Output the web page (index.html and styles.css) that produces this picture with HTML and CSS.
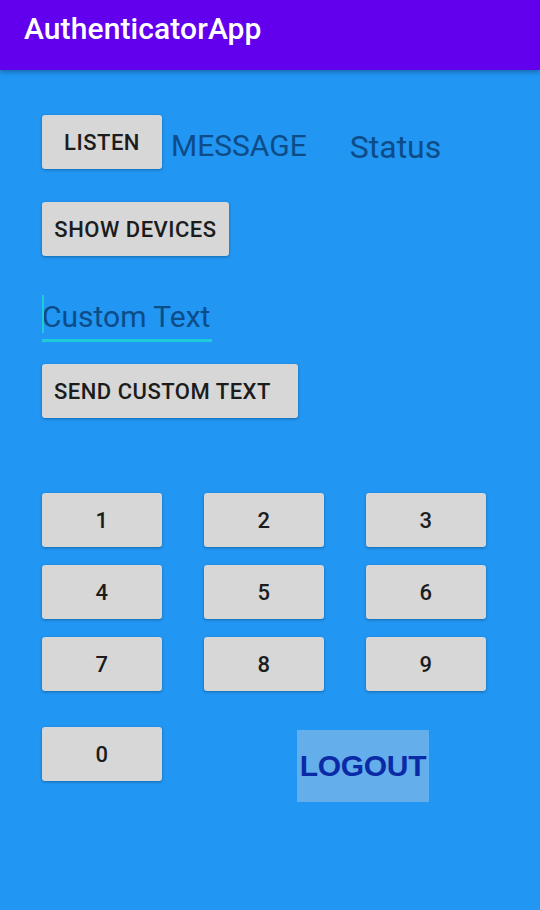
FILE: index.html
```html
<!DOCTYPE html>
<html>
<head>
<meta charset="utf-8">
<link rel="stylesheet" href="styles.css">
</head>
<body>
<header class="appbar"><span class="title">AuthenticatorApp</span></header>
<main class="content">
  <div class="row row-listen">
    <button class="btn btn-listen">LISTEN</button>
    <span class="label label-message">MESSAGE</span>
    <span class="label label-status">Status</span>
  </div>
  <div class="row row-devices">
    <button class="btn btn-devices">SHOW DEVICES</button>
  </div>
  <div class="row row-input">
    <div class="field"><span class="cursor"></span><span class="field-text">Custom Text</span></div>
  </div>
  <div class="row row-send">
    <button class="btn btn-send">SEND CUSTOM TEXT</button>
  </div>
  <div class="keypad">
    <button class="btn key">1</button>
    <button class="btn key">2</button>
    <button class="btn key">3</button>
    <button class="btn key">4</button>
    <button class="btn key">5</button>
    <button class="btn key">6</button>
    <button class="btn key">7</button>
    <button class="btn key">8</button>
    <button class="btn key">9</button>
  </div>
  <div class="row row-bottom">
    <button class="btn key">0</button>
    <button class="logout">LOGOUT</button>
  </div>
</main>
</body>
</html>
```

FILE: styles.css
```css
* { box-sizing: border-box; }
html, body { margin: 0; padding: 0; }
body {
  width: 540px;
  height: 910px;
  background: #2196f3;
  font-family: Roboto, "Liberation Sans", sans-serif;
  overflow: hidden;
}
.appbar {
  height: 70px;
  background: #6200ee;
  display: flex;
  align-items: flex-start;
  padding: 11px 0 0 24px;
  box-shadow: 0 2px 5px rgba(0,0,0,0.3);
  position: relative;
}
.title {
  color: #fff;
  font-size: 30px;
  font-weight: 500;
  letter-spacing: 0.1px;
}
.content {
  padding: 45px 0 0 42px;
  display: flex;
  flex-direction: column;
}
.row { display: flex; align-items: center; }
.btn {
  background: #d7d7d7;
  border: none;
  border-radius: 3px;
  box-shadow: 0 1px 3px rgba(0,0,0,0.3);
  color: #1c1c1c;
  font-family: Roboto, "Liberation Sans", sans-serif;
  font-weight: 500;
  font-size: 22px;
  letter-spacing: 0.5px;
  height: 54px;
  padding: 0 12px;
  margin: 0;
  display: flex;
  align-items: center;
  justify-content: center;
}
.btn-listen { width: 120px; }
.label {
  color: #0d4c87;
  font-weight: 400;
}
.label-message { margin-left: 9px; margin-top: 7px; font-size: 30px; }
.label-status { margin-left: 43px; margin-top: 10px; font-size: 32px; }
.row-devices { margin-top: 33px; }
.btn-devices { width: 187px; }
.row-input { margin-top: 38px; }
.field {
  position: relative;
  width: 170px;
  height: 48px;
  border-bottom: 3px solid #1ecbd8;
  display: flex;
  align-items: flex-start;
}
.cursor {
  position: absolute;
  left: 0;
  top: 1px;
  width: 2px;
  height: 38px;
  background: #1ecbd8;
}
.field-text {
  color: #0d4c87;
  font-size: 30px;
  line-height: 1;
  margin-top: 8px;
}
.row-send { margin-top: 22px; }
.btn-send { width: 256px; justify-content: flex-start; }
.keypad {
  margin-top: 75px;
  display: grid;
  grid-template-columns: repeat(3, 120px);
  column-gap: 42px;
  row-gap: 18px;
}
.key { width: 120px; }
.row-bottom { margin-top: 36px; align-items: flex-start; }
.logout {
  margin-left: 135px;
  margin-top: 3px;
  width: 132px;
  height: 72px;
  background: #64aeeb;
  border: none;
  color: #0a2aa6;
  font-family: "Liberation Sans", Arial, sans-serif;
  font-weight: 700;
  font-size: 30px;
  padding: 0;
  letter-spacing: -0.3px;
}
```
